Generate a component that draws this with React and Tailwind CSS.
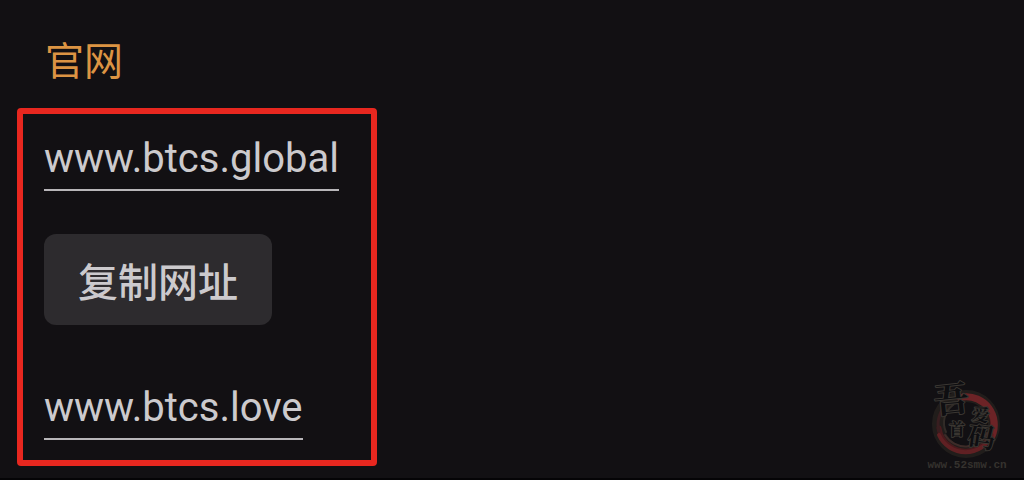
const Watermark = () => {
  return (
    <svg
      className="absolute right-3 bottom-0 h-[108px] w-[90px]"
      viewBox="0 -4 90 108"
      role="img"
      aria-label="吾爱首码 www.52smw.cn"
    >
      {/* brushed ring */}
      <g fill="none" strokeLinecap="round">
        <circle cx="44" cy="50" r="28" stroke="#28241f" strokeWidth="12" opacity="0.7" />
        <path d="M37 24 A27 27 0 1 1 17 54" stroke="#4a1a1d" strokeWidth="5" />
        <path d="M41 23 A28 28 0 0 1 70 62" stroke="#6c2326" strokeWidth="7" />
        <path d="M70 61 A29 29 0 0 1 17 61" stroke="#602023" strokeWidth="4" />
        <path d="M17 57 A27 27 0 0 1 25 30" stroke="#381e20" strokeWidth="3" />
        <path d="M65 59 A24 24 0 0 1 23 61" stroke="#3d2b28" strokeWidth="2" />
        <path d="M31 31 A22 22 0 0 0 24 58" stroke="#312b27" strokeWidth="2" />
      </g>
      <g
        className="font-['Noto_Serif_CJK_SC','Noto_Sans_CJK_SC',serif] font-bold"
        fill="#0e0e11"
        stroke="#3a3631"
        strokeWidth="2"
        strokeLinejoin="round"
        paintOrder="stroke"
      >
        <text x="12" y="38" fontSize="35" transform="rotate(-6 30 26)">吾</text>
        <text x="50" y="47" fontSize="17" transform="rotate(8 58 41)">爱</text>
        <text x="27" y="61" fontSize="16">首</text>
        <text x="46" y="73" fontSize="27" transform="rotate(8 59 63)">码</text>
      </g>
      <text
        x="45"
        y="94"
        textAnchor="middle"
        fontSize="11"
        fill="#35322e"
        className="font-['Liberation_Mono',monospace] font-bold"
      >
        www.52smw.cn
      </text>
    </svg>
  );
};

const SiteLink = ({ host }) => {
  return (
    <a
      href={`https://${host}`}
      className="border-b-2 border-[#b8b6b9] pb-1.5 text-[40px] leading-12 text-[#cccacd]"
    >
      {host}
    </a>
  );
};

const App = () => {
  return (
    <main className="relative min-h-screen border-b-2 border-[#050406] bg-[#121013] px-[17px] pt-9 font-[Roboto,'Noto_Sans_CJK_SC',sans-serif]">
      <h1 className="px-7 text-[39px] leading-13 text-[#dc9443]">官网</h1>

      <section className="mt-5 flex w-[360px] max-w-full flex-col items-start rounded-sm border-6 border-[#e7271f] px-[21px] pt-[21px] pb-5">
        <SiteLink host="www.btcs.global" />
        <button
          type="button"
          className="mt-[43px] mb-[59px] rounded-xl bg-[#2d2b2e] px-[34px] pt-[25px] pb-4 text-[40px] leading-[50px] font-medium text-[#cccacd]"
        >
          复制网址
        </button>
        <SiteLink host="www.btcs.love" />
      </section>

      <Watermark />
    </main>
  );
};

export default App;
